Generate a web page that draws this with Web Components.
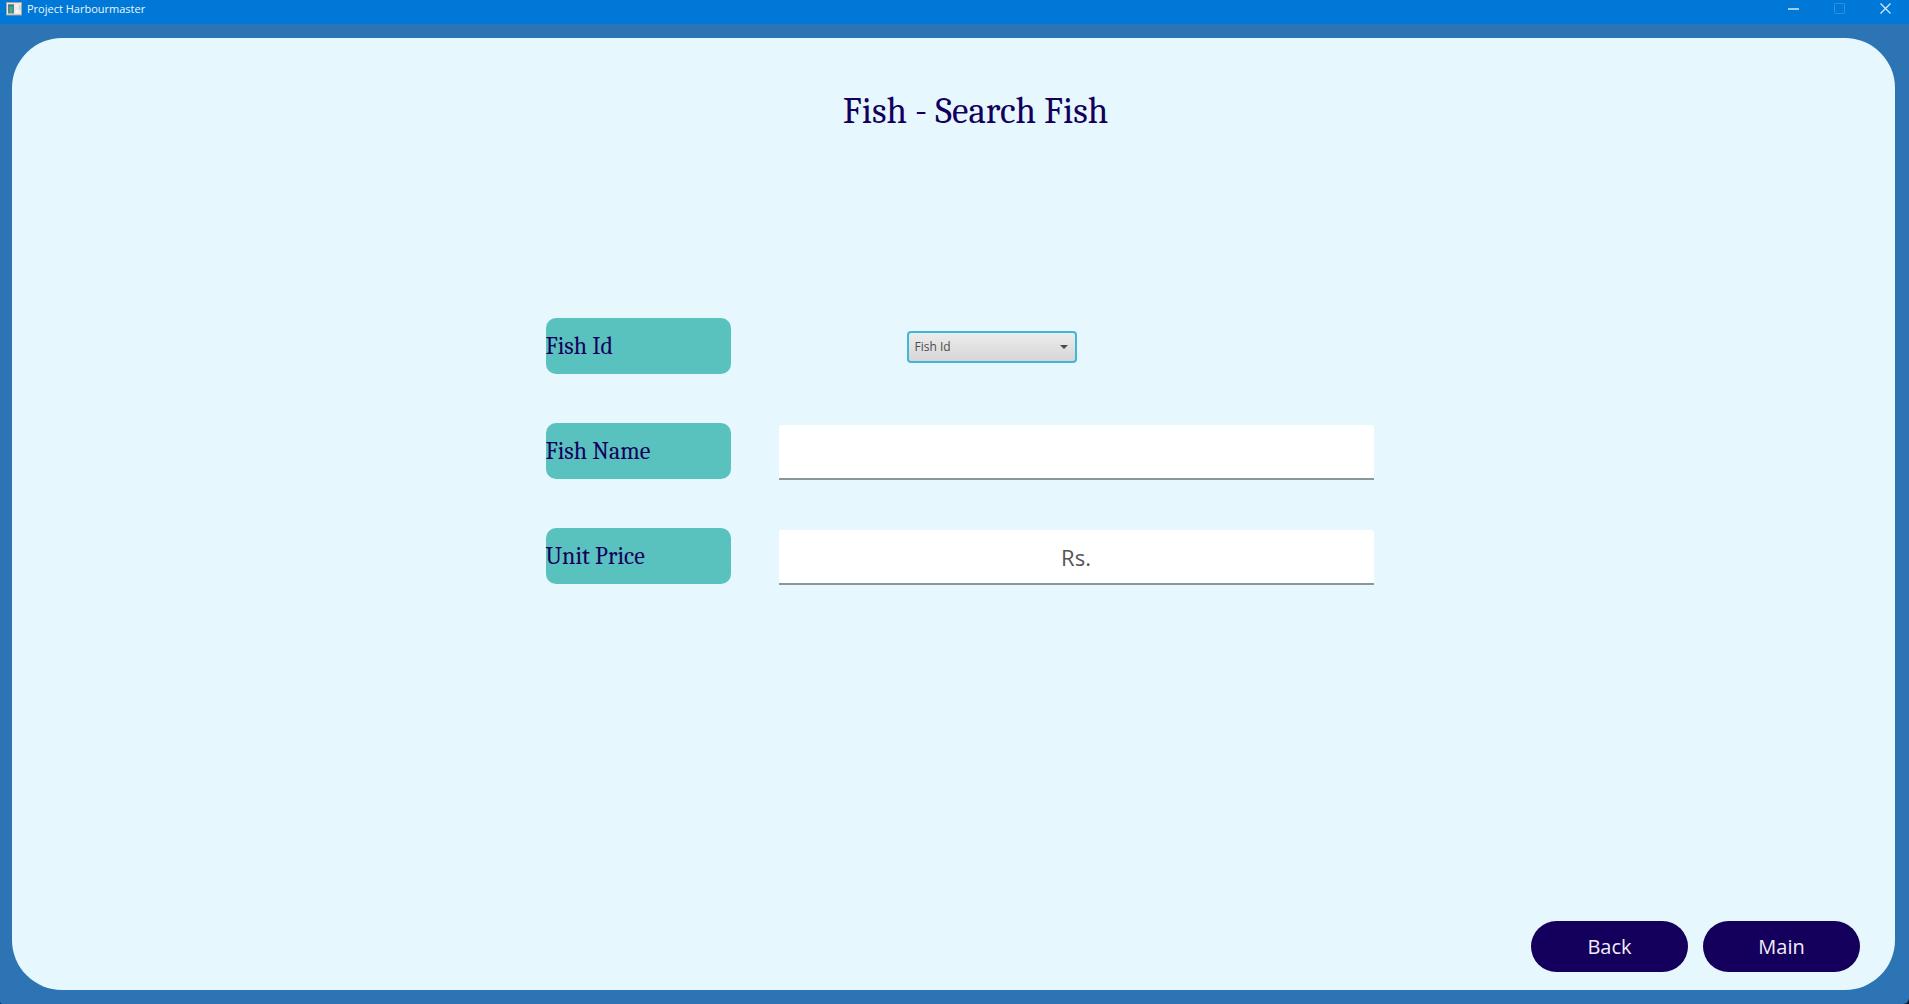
<!DOCTYPE html>
<html lang="en">
<head>
<meta charset="utf-8">
<title>Project Harbourmaster</title>
<style>
  html { background: #06182b; }
  body { margin: 0; }
</style>
</head>
<body>
<app-window caption="Project Harbourmaster">
  <fish-search></fish-search>
</app-window>

<script>
const define = (name, render) => customElements.define(name, class extends HTMLElement {
  connectedCallback() {
    if (this.shadowRoot) return;
    this.attachShadow({ mode: "open" }).innerHTML = render(this);
  }
});

define("title-bar", () => `
  <style>
    :host { display: flex; align-items: flex-start; justify-content: space-between; height: 24px; background: #0078d7; color: #eef6fc; font: 11px/18px "Open Sans", "Noto Sans", sans-serif; }
    .caption { display: flex; align-items: center; gap: 5px; padding-left: 6px; }
    .controls { display: flex; padding-right: 1px; }
    button { display: flex; align-items: center; justify-content: center; width: 46px; height: 17px; padding: 0; border: 0; background: none; color: #d4e9f9; }
    button:disabled { color: #2b93e6; }
    svg { display: block; }
  </style>
  <div class="caption">
    <svg width="16" height="14" viewBox="0 0 16 14" aria-hidden="true">
      <rect x="0.5" y="0.5" width="15" height="12.5" fill="#e9e9e9" stroke="#a9a49c"/>
      <rect x="2" y="2.5" width="6" height="9" fill="#478d88"/>
      <path d="M2 2.5h6v2H2z" fill="#4d7798"/>
      <path d="M4 5h2v6H4z" fill="#53a47d"/>
      <path d="M9.500 3h2v2h-2zM9.500 8h3v3h-3z" fill="#f8f8f8"/>
      <path d="M13 3h1.500v5H13z" fill="#c5d9c4"/>
    </svg>
    <slot></slot>
  </div>
  <div class="controls">
    <button aria-label="Minimize"><svg width="11" height="11" viewBox="0 0 11 11"><path d="M0 6h11" stroke="currentColor" stroke-width="1.500"/></svg></button>
    <button aria-label="Maximize" disabled><svg width="11" height="11" viewBox="0 0 11 11"><rect x="0.5" y="0.5" width="10" height="10" rx="1" fill="none" stroke="currentColor"/></svg></button>
    <button aria-label="Close"><svg width="11" height="11" viewBox="0 0 11 11"><path d="M.5.5l10 10M10.500.5l-10 10" stroke="currentColor" stroke-width="1.300"/></svg></button>
  </div>`);

define("app-window", el => `
  <style>
    :host { display: flex; flex-direction: column; min-height: 100vh; overflow: hidden; background: #2d74b5; border-radius: 0 0 6px 2px; }
    main { flex: 1; display: flex; padding: 14px 14px 14px 12px; }
    ::slotted(*) { flex: 1; }
  </style>
  <title-bar>${el.getAttribute("caption")}</title-bar>
  <main><slot></slot></main>`);

define("field-row", el => {
  const label = el.getAttribute("label");
  const control = el.hasAttribute("choice")
    ? `<div class="combo"><select id="control"><option>${label}</option></select>
       <svg width="8" height="4" viewBox="0 0 8 4" aria-hidden="true"><path d="M0 0h8L4 4z" fill="#4a4a4a"/></svg></div>`
    : `<input id="control" type="text" value="${el.getAttribute("value") || ""}">`;
  return `
  <style>
    :host { display: grid; grid-template-columns: 185px minmax(0, 595px); column-gap: 48px; min-height: 57px; }
    label { box-sizing: border-box; height: 56px; border-radius: 10px; background: #59c1be; color: #14005c; font: 24px/56px Cambria, Caladea, "Liberation Serif", serif; }
    input { box-sizing: border-box; align-self: end; width: 100%; height: 55px; padding: 0 8px; border: 0; border-bottom: 2px solid #89979b; border-radius: 3px 3px 0 0; background: #fff; color: #555; font: 22px "Open Sans", "Noto Sans", sans-serif; text-align: center; outline: 0; }
    .combo { display: grid; align-self: center; align-items: center; width: 170px; margin-left: 128px; }
    .combo > * { grid-area: 1 / 1; }
    select { appearance: none; box-sizing: border-box; width: 100%; height: 32px; padding: 0 6px; border: 2px solid #43b4da; border-radius: 4px; background: linear-gradient(#ececec, #d6d6d6); color: #4c4c4c; font: 12px "Open Sans", "Noto Sans", sans-serif; outline: 0; }
    .combo svg { justify-self: end; margin-right: 9px; pointer-events: none; }
  </style>
  <label for="control">${label}</label>${control}`;
});

define("pill-button", () => `
  <style>
    :host { display: block; }
    button { width: 157px; height: 51px; padding: 0; border: 0; border-radius: 26px; background: #14005c; color: #f0eef6; font: 20px "Open Sans", "Noto Sans", sans-serif; cursor: pointer; }
  </style>
  <button type="button"><slot></slot></button>`);

define("fish-search", () => `
  <style>
    :host { display: flex; flex-direction: column; box-sizing: border-box; padding: 49px 35px 18px 47px; border-radius: 50px; background: #e6f8fd; }
    h1 { margin: 0; padding-left: 32px; color: #14005c; font: 400 37px/48px Cambria, Caladea, "Liberation Serif", serif; text-align: center; }
    form { display: flex; flex-direction: column; gap: 48px; width: 828px; max-width: 100%; margin: 183px auto 48px; }
    footer { display: flex; justify-content: flex-end; gap: 15px; margin-top: auto; }
  </style>
  <h1>Fish - Search Fish</h1>
  <form>
    <field-row label="Fish Id" choice></field-row>
    <field-row label="Fish Name"></field-row>
    <field-row label="Unit Price" value="Rs."></field-row>
  </form>
  <footer>
    <pill-button>Back</pill-button>
    <pill-button>Main</pill-button>
  </footer>`);
</script>
</body>
</html>
